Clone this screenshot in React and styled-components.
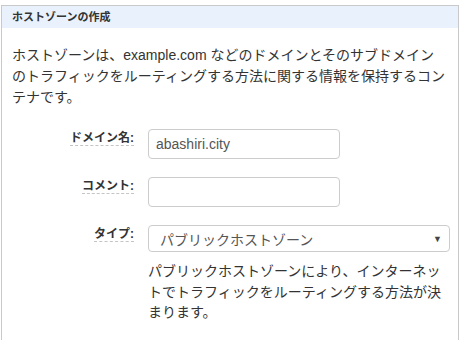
import React from 'react';
import styled, { createGlobalStyle } from 'styled-components';

const GlobalStyle = createGlobalStyle`
  html, body {
    margin: 0;
    padding: 0;
    background: #fff;
  }
  body {
    font-family: 'Liberation Sans', 'Noto Sans CJK JP', sans-serif;
    color: #333;
  }
`;

const Panel = styled.section`
  margin: 5px 0 0 1px;
  width: 458px;
  border: 1px solid #c9c9c9;
  border-bottom: none;
  min-height: 340px;
  box-sizing: border-box;
`;

const Header = styled.h2`
  margin: 0;
  height: 22px;
  padding: 0 10px;
  background: #e9f1fc;
  font-size: 11px;
  font-weight: bold;
  line-height: 23px;
  color: #333;
`;

const Body = styled.div`
  padding: 17px 10px 0;
`;

const Desc = styled.p`
  margin: 0 0 21px;
  font-size: 14px;
  line-height: 21px;
  color: #333;
`;

const Form = styled.div`
  display: grid;
  grid-template-columns: 122px 1fr;
  column-gap: 14px;
  row-gap: 18px;
  align-items: start;
`;

const LabelCell = styled.div`
  display: flex;
  justify-content: flex-end;
  padding-top: 2px;
`;

const Label = styled.label`
  font-size: 12px;
  font-weight: bold;
  line-height: 14px;
  color: #333;
  border-bottom: 1px dashed #c4c4c4;
`;

const Field = styled.div`
  display: flex;
  flex-direction: column;
  gap: 9px;
`;

const TextInput = styled.input`
  box-sizing: border-box;
  width: 192px;
  height: 30px;
  padding: 0 7px;
  border: 1px solid #ccc;
  border-radius: 4px;
  font-family: 'Liberation Sans', 'Noto Sans CJK JP', sans-serif;
  font-size: 14px;
  color: #555;
  outline: none;
`;

const SelectBox = styled.div`
  box-sizing: border-box;
  width: 302px;
  height: 27px;
  padding: 0 7px 0 11px;
  border: 1px solid #ccc;
  border-radius: 4px;
  display: flex;
  align-items: center;
  justify-content: space-between;
  font-size: 14px;
  color: #555;
`;

const Arrow = styled.span`
  font-size: 9px;
  color: #444;
`;

const Help = styled.p`
  margin: 0;
  font-size: 14px;
  line-height: 20.5px;
  color: #333;
`;

export default function App() {
  return (
    <>
      <GlobalStyle />
      <Panel>
        <Header>ホストゾーンの作成</Header>
        <Body>
          <Desc>
            ホストゾーンは、example.com などのドメインとそのサブドメインのトラフィックをルーティングする方法に関する情報を保持するコンテナです。
          </Desc>
          <Form>
            <LabelCell>
              <Label>ドメイン名:</Label>
            </LabelCell>
            <Field>
              <TextInput defaultValue="abashiri.city" />
            </Field>
            <LabelCell>
              <Label>コメント:</Label>
            </LabelCell>
            <Field>
              <TextInput defaultValue="" />
            </Field>
            <LabelCell>
              <Label>タイプ:</Label>
            </LabelCell>
            <Field>
              <SelectBox>
                <span>パブリックホストゾーン</span>
                <Arrow>▼</Arrow>
              </SelectBox>
              <Help>
                パブリックホストゾーンにより、インターネットでトラフィックをルーティングする方法が決まります。
              </Help>
            </Field>
          </Form>
        </Body>
      </Panel>
    </>
  );
}
